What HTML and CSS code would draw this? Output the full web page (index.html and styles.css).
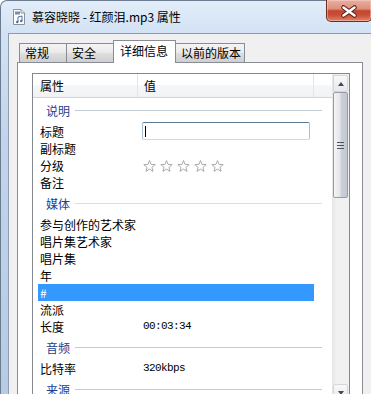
FILE: index.html
```html
<!DOCTYPE html>
<html lang="zh-CN">
<head>
    <meta charset="UTF-8">
    <title>慕容晓晓 - 红颜泪.mp3 属性</title>
    <link rel="stylesheet" href="styles.css">
</head>
<body>
    <div class="window">
        <div class="titlebar">
            <svg class="file-icon" viewBox="0 0 16 16">
                <path d="M2.5 0.5 H10 L13.5 4 V15.5 H2.5 Z" fill="#fdfdfd" stroke="#8b9099"/>
                <path d="M10 0.5 V4 H13.5" fill="#e4e7ec" stroke="#8b9099"/>
                <rect x="4" y="2.5" width="5" height="3" fill="#7d8ea8"/>
                <path d="M7 13 V8 L11 7 V12" fill="none" stroke="#4d6e9e" stroke-width="1"/>
                <circle cx="6.2" cy="13" r="1.2" fill="#4d6e9e"/>
                <circle cx="10.2" cy="12" r="1.2" fill="#4d6e9e"/>
            </svg>
            <span class="caption">慕容晓晓 - 红颜泪.mp3 属性</span>
            <div class="close-btn">
                <svg viewBox="0 0 46 22" width="46" height="22">
                    <path d="M17.5 8.5 L28.5 16.5 M28.5 8.5 L17.5 16.5" stroke="#5a1c12" stroke-width="4.6" stroke-linecap="round"/>
                    <path d="M17.5 8.5 L28.5 16.5 M28.5 8.5 L17.5 16.5" stroke="#ffffff" stroke-width="2.6" stroke-linecap="round"/>
                </svg>
            </div>
        </div>

        <div class="client">
            <div class="tabs">
                <div class="tab">常规</div>
                <div class="tab">安全</div>
                <div class="tab active">详细信息</div>
                <div class="tab wide">以前的版本</div>
            </div>

            <div class="panel">
                <div class="listview">
                    <div class="list">
                        <div class="header">
                            <div class="col col-name">属性</div>
                            <div class="col col-value">值</div>
                            <div class="col col-rest"></div>
                        </div>

                        <div class="group"><span>说明</span><i class="group-line"></i></div>
                        <div class="row">
                            <span class="name">标题</span>
                            <span class="value"><span class="textbox"><span class="caret"></span></span></span>
                        </div>
                        <div class="row"><span class="name">副标题</span></div>
                        <div class="row">
                            <span class="name">分级</span>
                            <span class="value stars">
                                <svg viewBox="0 0 13 13"><polygon points="6.5,0.5 8.03,4.4 12.21,4.65 8.97,7.3 10.03,11.35 6.5,9.1 2.97,11.35 4.03,7.3 0.79,4.65 4.97,4.4"/></svg>
                                <svg viewBox="0 0 13 13"><polygon points="6.5,0.5 8.03,4.4 12.21,4.65 8.97,7.3 10.03,11.35 6.5,9.1 2.97,11.35 4.03,7.3 0.79,4.65 4.97,4.4"/></svg>
                                <svg viewBox="0 0 13 13"><polygon points="6.5,0.5 8.03,4.4 12.21,4.65 8.97,7.3 10.03,11.35 6.5,9.1 2.97,11.35 4.03,7.3 0.79,4.65 4.97,4.4"/></svg>
                                <svg viewBox="0 0 13 13"><polygon points="6.5,0.5 8.03,4.4 12.21,4.65 8.97,7.3 10.03,11.35 6.5,9.1 2.97,11.35 4.03,7.3 0.79,4.65 4.97,4.4"/></svg>
                                <svg viewBox="0 0 13 13"><polygon points="6.5,0.5 8.03,4.4 12.21,4.65 8.97,7.3 10.03,11.35 6.5,9.1 2.97,11.35 4.03,7.3 0.79,4.65 4.97,4.4"/></svg>
                            </span>
                        </div>
                        <div class="row"><span class="name">备注</span></div>

                        <div class="group"><span>媒体</span><i class="group-line light"></i></div>
                        <div class="row"><span class="name">参与创作的艺术家</span></div>
                        <div class="row"><span class="name">唱片集艺术家</span></div>
                        <div class="row"><span class="name">唱片集</span></div>
                        <div class="row"><span class="name">年</span></div>
                        <div class="row selected"><span class="name">#</span></div>
                        <div class="row"><span class="name">流派</span></div>
                        <div class="row"><span class="name">长度</span><span class="value mono">00:03:34</span></div>

                        <div class="group"><span>音频</span><i class="group-line"></i></div>
                        <div class="row"><span class="name">比特率</span><span class="value mono">320kbps</span></div>

                        <div class="group"><span>来源</span><i class="group-line"></i></div>
                    </div>

                    <div class="scrollbar">
                        <div class="sb-btn"><i class="arrow up"></i></div>
                        <div class="sb-thumb"><i class="grip"></i></div>
                        <div class="sb-track"></div>
                        <div class="sb-btn"><i class="arrow down"></i></div>
                    </div>
                </div>
            </div>
        </div>
    </div>
</body>
</html>
```

FILE: styles.css
```css
* {
    box-sizing: border-box;
}

body {
    margin: 0;
    width: 371px;
    height: 394px;
    overflow: hidden;
    font-family: "Noto Sans CJK SC", "Microsoft YaHei", sans-serif;
    font-size: 12px;
    color: #000000;
    background: #ffffff;
}

/* window frame */
.window {
    width: 380px;
    height: 430px;
    border: 1px solid #6b7b90;
    border-bottom: none;
    border-radius: 7px 7px 0 0;
    background: linear-gradient(to bottom, #e2edf9, #d2e2f4 32px, #c1d4eb 140px, #b5cae3);
}

.titlebar {
    display: flex;
    align-items: center;
    height: 32px;
    padding: 0 7px 0 10px;
}

.file-icon {
    width: 16px;
    height: 16px;
    flex: none;
}

.caption {
    margin-left: 5px;
    line-height: 16px;
    white-space: nowrap;
}

.close-btn {
    margin-left: auto;
    align-self: flex-start;
    margin-top: -1px;
    width: 46px;
    height: 22px;
    flex: none;
    border: 1px solid #6e2b20;
    border-top: none;
    border-radius: 0 0 5px 5px;
    background: linear-gradient(to bottom, #e9b0a2, #dc8f7d 42%, #c6452e 52%, #c84f37 72%, #dd8469);
    box-shadow: inset 0 0 0 1px rgba(255, 220, 210, 0.45);
}

.close-btn svg {
    display: block;
    margin: -1px 0 0 -1px;
}

/* dialog body */
.client {
    margin: 0 7px;
    height: 400px;
    border: 1px solid #8e9cad;
    background: #f0f0f0;
    padding: 6px 8px 0 8px;
}

.tabs {
    display: flex;
    align-items: flex-end;
    height: 22px;
    padding-left: 2px;
    position: relative;
    z-index: 1;
}

.tab {
    width: 48px;
    height: 19px;
    margin-right: -1px;
    padding: 1px 0 0 5px;
    border: 1px solid #898c95;
    border-bottom: none;
    background: linear-gradient(to bottom, #f4f4f4, #ebebeb 45%, #dddddd 55%, #cfcfcf);
    line-height: 16px;
    white-space: nowrap;
}

.tab.active {
    width: 63px;
    height: 23px;
    margin-bottom: -1px;
    padding: 1px 0 0 6px;
    background: #ffffff;
    line-height: 18px;
}

.tab.wide {
    width: 70px;
}

.panel {
    height: 360px;
    border: 1px solid #898c95;
    background: #ffffff;
    padding: 10px 0 0 14px;
}

/* details list */
.listview {
    display: flex;
    width: 318px;
    height: 330px;
    border: 1px solid #828790;
}

.list {
    flex: 1;
    overflow: hidden;
}

.header {
    display: flex;
    height: 24px;
    border-bottom: 1px solid #d5d5d5;
    background: linear-gradient(to bottom, #ffffff, #ffffff 50%, #f6f7f9 50%, #f1f2f4);
}

.col {
    padding-top: 2px;
    line-height: 19px;
    border-right: 1px solid #e2e5ea;
}

.col-name {
    width: 105px;
    padding-left: 7px;
}

.col-value {
    width: 176px;
    padding-left: 6px;
}

.col-rest {
    flex: 1;
    border-right: none;
}

.group {
    display: flex;
    align-items: center;
    height: 25px;
    margin: 0 10px 0 5px;
    padding-left: 8px;
    color: #22408e;
    line-height: 16px;
}

.group-line {
    flex: 1;
    height: 1px;
    margin-left: 5px;
    background: #bfcddb;
}

.group-line.light {
    background: #dadde2;
}

.row {
    display: flex;
    align-items: center;
    height: 17px;
    margin: 0 18px 0 5px;
    padding-left: 2px;
    line-height: 17px;
    white-space: nowrap;
}

.row.selected {
    background: #3399ff;
    color: #ffffff;
}

.name {
    width: 103px;
    flex: none;
}

.value {
    display: flex;
    align-items: center;
}

.mono {
    font-family: "Liberation Mono", "DejaVu Sans Mono", monospace;
    font-size: 11px;
    letter-spacing: -0.6px;
}

.textbox {
    display: block;
    width: 168px;
    height: 18px;
    margin: -1px 0 0 -1px;
    padding: 3px 0 0 2px;
    border: 1px solid #a9bfd0;
    border-top-color: #5c7c95;
    border-bottom-color: #c9dbe8;
    border-radius: 2px;
    background: #ffffff;
}

.caret {
    display: block;
    width: 1px;
    height: 11px;
    background: #000000;
}

.stars {
    gap: 4px;
    margin-top: 1px;
}

.stars svg {
    width: 13px;
    height: 13px;
}

.stars polygon {
    fill: #ffffff;
    stroke: #aaaaaa;
    stroke-width: 1;
    stroke-linejoin: round;
}

/* vertical scrollbar */
.scrollbar {
    display: flex;
    flex-direction: column;
    width: 17px;
    padding: 1px 1px 1px 1px;
    background: linear-gradient(to right, #e6e6e6, #f2f2f2 30%, #f0f0f0);
}

.sb-btn {
    display: flex;
    align-items: center;
    justify-content: center;
    height: 17px;
    border: 1px solid #d4d6da;
    border-radius: 2px;
    background: linear-gradient(to bottom, #f8f8f8, #e8e9eb);
}

.arrow {
    width: 0;
    height: 0;
    border-left: 3.5px solid transparent;
    border-right: 3.5px solid transparent;
}

.arrow.up {
    border-bottom: 4px solid #3e4a5c;
}

.arrow.down {
    border-top: 4px solid #3e4a5c;
}

.sb-thumb {
    display: flex;
    align-items: center;
    justify-content: center;
    height: 106px;
    border: 1px solid #979ba3;
    border-radius: 2px;
    background: linear-gradient(to right, #f4f5f7, #e4e6eb 45%, #cdd0d8 55%, #c3c7d1);
}

.grip {
    width: 7px;
    height: 7px;
    background: linear-gradient(to bottom, #4e5463 1px, transparent 1px, transparent 3px, #4e5463 3px, #4e5463 4px, transparent 4px, transparent 6px, #4e5463 6px);
}

.sb-track {
    flex: 1;
}
```
